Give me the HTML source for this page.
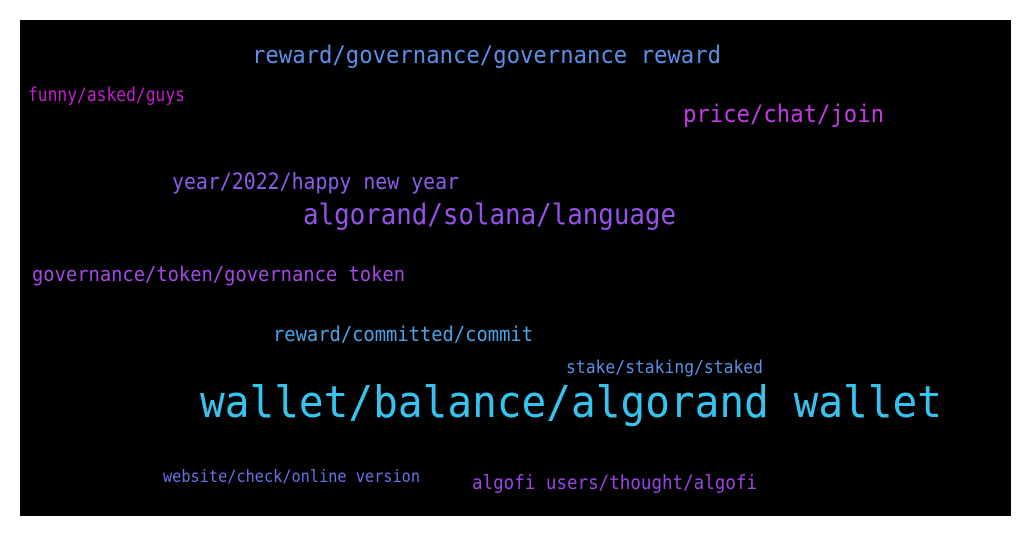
<!DOCTYPE html>
<html><head><meta charset="utf-8"><style>
html,body{margin:0;padding:0;background:#fff;width:1031px;height:536px;overflow:hidden}
svg{display:block}
text{font-family:"DejaVu Sans Mono","Liberation Mono",monospace}
</style></head><body>
<svg width="1031" height="536" xmlns="http://www.w3.org/2000/svg">
<rect x="0" y="0" width="1031" height="536" fill="#fff"/>
<rect x="20" y="20" width="991" height="496" fill="#000"/>
<text x="252" y="63" font-size="24" fill="#5b8ee6" textLength="469" lengthAdjust="spacingAndGlyphs">reward/governance/governance reward</text>
<text x="28" y="101" font-size="18.5" fill="#c41dcf" textLength="157" lengthAdjust="spacingAndGlyphs">funny/asked/guys</text>
<text x="683" y="122" font-size="24" fill="#c03be2" textLength="201" lengthAdjust="spacingAndGlyphs">price/chat/join</text>
<text x="172" y="189" font-size="22" fill="#8a5ce8" textLength="287" lengthAdjust="spacingAndGlyphs">year/2022/happy new year</text>
<text x="303" y="224" font-size="28.5" fill="#9552e8" textLength="373" lengthAdjust="spacingAndGlyphs">algorand/solana/language</text>
<text x="32" y="281" font-size="20.5" fill="#a24ae3" textLength="373" lengthAdjust="spacingAndGlyphs">governance/token/governance token</text>
<text x="273" y="341" font-size="20.5" fill="#4aa3e6" textLength="260" lengthAdjust="spacingAndGlyphs">reward/committed/commit</text>
<text x="566" y="373" font-size="18" fill="#5a8ee4" textLength="197" lengthAdjust="spacingAndGlyphs">stake/staking/staked</text>
<text x="200" y="417" font-size="44" fill="#35c4f0" textLength="742" lengthAdjust="spacingAndGlyphs">wallet/balance/algorand wallet</text>
<text x="163" y="482" font-size="17" fill="#6a72e6" textLength="257" lengthAdjust="spacingAndGlyphs">website/check/online version</text>
<text x="472" y="489" font-size="19.5" fill="#9a45e2" textLength="285" lengthAdjust="spacingAndGlyphs">algofi users/thought/algofi</text>
</svg>
</body></html>
